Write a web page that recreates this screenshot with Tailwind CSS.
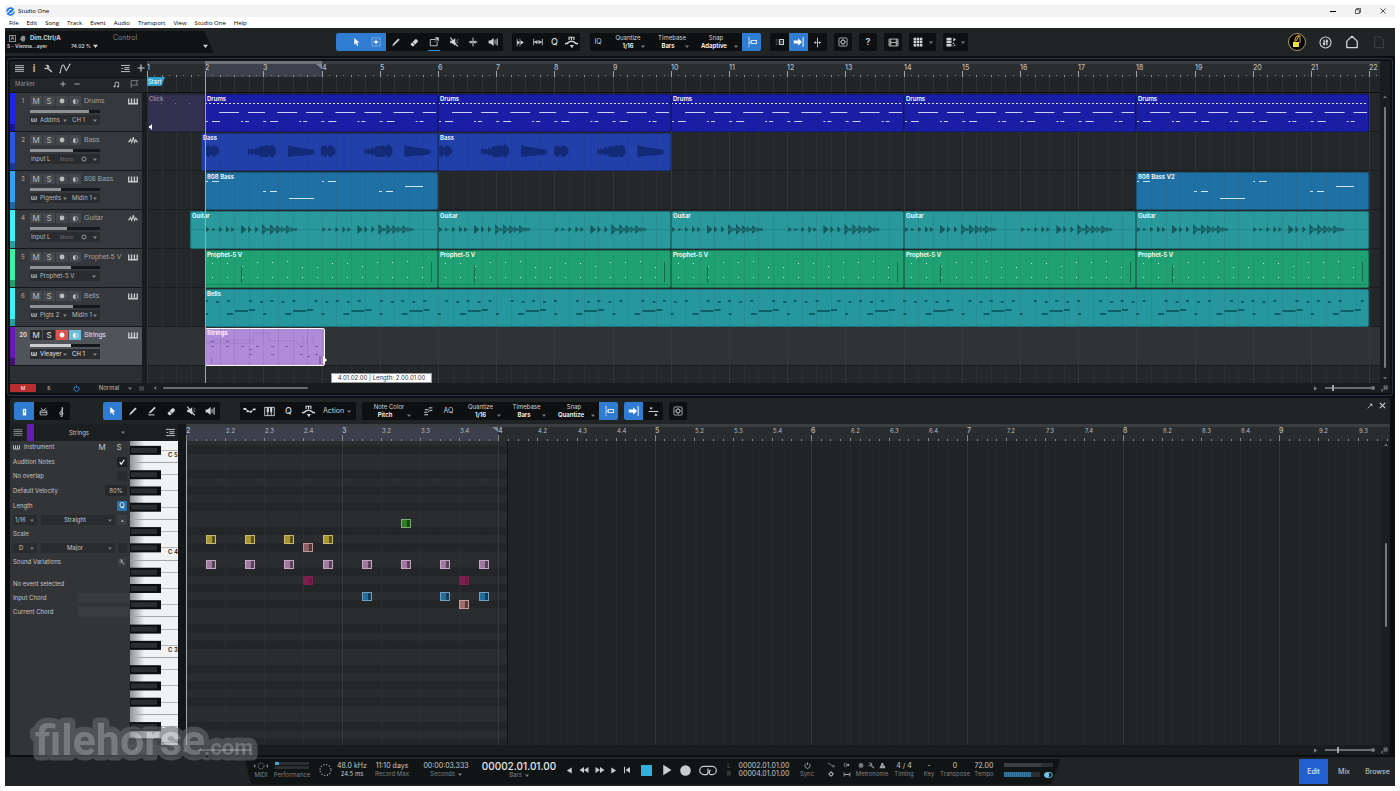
<!DOCTYPE html>
<html lang="en">
<head>
    <meta charset="UTF-8">
    <meta name="viewport" content="width=device-width, initial-scale=1.0">
    <title>Studio One</title>

    <!-- Tailwind CSS -->
    <script src="https://cdn.jsdelivr.net/npm/@tailwindcss/browser@4"></script>
</head>
<body class="bg-white p-[5px] h-screen flex flex-col overflow-hidden font-['Inter','Liberation_Sans',sans-serif] text-[6px] leading-[8px] text-[#b9bbbd]">

    <!-- Icon sprite -->
    <svg class="hidden">
        <symbol id="i-arrow" viewBox="0 0 16 16"><path d="M4 1l9 8-4 .4 2.4 4.8-2.2 1L7 10.4 4 13z" fill="currentColor"/></symbol>
        <symbol id="i-range" viewBox="0 0 16 16"><rect x="1.500" y="1.500" width="13" height="13" fill="none" stroke="currentColor" stroke-width="1.300" stroke-dasharray="2 1.700"/><path d="M8 4v8M4 8h8" stroke="currentColor" stroke-width="1.500"/><rect x="6" y="6" width="4" height="4" fill="currentColor"/></symbol>
        <symbol id="i-pen" viewBox="0 0 16 16"><path d="M2 15l2-5 9-9 2.4 2.2-9 9z" fill="currentColor"/></symbol>
        <symbol id="i-paint" viewBox="0 0 16 16"><path d="M3 12l1-3 8-8 2 2-8 8z" fill="currentColor"/><path d="M2 14.2h10" stroke="currentColor" stroke-width="1.6"/></symbol>
        <symbol id="i-eraser" viewBox="0 0 16 16"><path d="M1.500 10L9 2.500q1.500-1.500 3 0l1.500 1.500q1.500 1.500 0 3L6.500 14q-1.500 1-3 0L1.500 12.500q-1-1.200 0-2.500z" fill="currentColor"/><path d="M4.500 7.500l4.500 4.500" stroke="#0d0f10" stroke-width="1.300"/></symbol>
        <symbol id="i-split" viewBox="0 0 16 16"><path d="M11 4H2v10h11V7" fill="none" stroke="currentColor" stroke-width="1.400"/><path d="M10 1h5v5zM9 8l4-4" fill="currentColor" stroke="currentColor"/></symbol>
        <symbol id="i-mute" viewBox="0 0 16 16"><path d="M2 6h3l5-4v12l-5-4H2z" fill="currentColor"/><path d="M2 1l12 14" stroke="currentColor" stroke-width="1.800"/><path d="M12 6l3-2M12 8.500h3" stroke="currentColor"/></symbol>
        <symbol id="i-bend" viewBox="0 0 16 16"><path d="M8 1v14M1 8h14" fill="none" stroke="currentColor" stroke-width="1.500"/><path d="M4 5l3 3-3 3zM12 5L9 8l3 3z" fill="currentColor"/></symbol>
        <symbol id="i-speaker" viewBox="0 0 16 16"><path d="M1 5.500h3L9 1.500v13L4 10.500H1z" fill="currentColor"/><path d="M11 5v6M13 3.500v9M15 2v12" stroke="currentColor" stroke-width="1.200"/></symbol>
        <symbol id="i-ffw" viewBox="0 0 16 16"><path d="M2 1v14M7 1v14" stroke="currentColor"/><path d="M2 4l5 4-5 4zM8 4l6 4-6 4z" fill="currentColor"/></symbol>
        <symbol id="i-stretch" viewBox="0 0 16 16"><path d="M1 3v10M15 3v10M2 8h12M8 5v6" stroke="currentColor" stroke-width="1.300"/><path d="M2 8l4-3v6zM14 8l-4-3v6z" fill="currentColor"/></symbol>
        <symbol id="i-hump" viewBox="0 0 16 16"><path d="M5 5V1.500h6V5M8 1.500V5" fill="none" stroke="currentColor" stroke-width="1.400"/><path d="M0 9.500q3 0 4-1.500t4-1.500 4 1.500 4 1.500" fill="none" stroke="currentColor" stroke-width="1.800"/><path d="M6 11h5l-2.500 4z" fill="currentColor"/></symbol>
        <symbol id="i-snap" viewBox="0 0 16 16"><path d="M4 1v14" stroke="currentColor" stroke-width="1.300" stroke-dasharray="5 1"/><path d="M4 8h3M7 6h7v4H7z" fill="none" stroke="currentColor" stroke-width="1.500"/></symbol>
        <symbol id="i-follow" viewBox="0 0 16 16"><path d="M1 6h6V3l5 5-5 5v-3H1z" fill="currentColor"/><path d="M13.500 1.500v13" stroke="currentColor" stroke-width="1.300"/></symbol>
        <symbol id="i-ripple" viewBox="0 0 16 16"><path d="M2 4h3v8H2z" fill="none" stroke="currentColor" opacity=".4"/><path d="M7.500 4h6v8h-6z" fill="none" stroke="currentColor" stroke-width="1.800"/><path d="M9 8h3" stroke="currentColor"/></symbol>
        <symbol id="i-cursor" viewBox="0 0 16 16"><path d="M8 1v14M3 8h3M10 8h3" stroke="currentColor" stroke-width="1.300"/><path d="M4.500 6l2.500 2-2.500 2zM11.500 6L9 8l2.500 2z" fill="currentColor"/></symbol>
        <symbol id="i-target" viewBox="0 0 16 16"><rect x="1.500" y="1.500" width="13" height="13" rx="1.500" fill="none" stroke="currentColor" stroke-width="1.200"/><circle cx="8" cy="8" r="3.200" fill="none" stroke="currentColor" stroke-width="1.500"/><path d="M8 3v2M8 11v2M3 8h2M11 8h2" stroke="currentColor"/></symbol>
        <symbol id="i-film" viewBox="0 0 16 16"><path d="M4 3h8v10H4zM4 8h8M1.500 3H4M12 3h2.500v10H12M4 13H1.500V3M1.500 6.300H4M1.500 9.700H4M12 6.300h2.500M12 9.700h2.500" fill="none" stroke="currentColor" stroke-width="1.200"/></symbol>
        <symbol id="i-grid" viewBox="0 0 16 16"><path d="M1 1h4v4H1zM6 1h4v4H6zM11 1h4v4h-4zM1 6h4v4H1zM6 6h4v4H6zM11 6h4v4h-4zM1 11h4v4H1zM6 11h4v4H6zM11 11h4v4h-4z" fill="currentColor"/></symbol>
        <symbol id="i-rows" viewBox="0 0 16 16"><path d="M0 1h8v4H0zM0 6h8v4H0zM0 11h8v4H0zM11 1l4 3-4 3zM10 9h2v2h-2zM12 12h2v2h-2zM10 13h1v2h-1z" fill="currentColor"/></symbol>
        <symbol id="i-menu" viewBox="0 0 16 16"><path d="M0 3h16M0 6.300h16M0 9.700h16M0 13h16" stroke="currentColor" stroke-width="1.600"/></symbol>
        <symbol id="i-list" viewBox="0 0 16 16"><path d="M0 2.500h16M0 13.500h16M1 8h3M6 6.500h9M6 9.500h9" stroke="currentColor" stroke-width="1.700"/></symbol>
        <symbol id="i-wrench" viewBox="0 0 16 16"><path d="M6 7l8 7" stroke="currentColor" stroke-width="2.400"/><path d="M3 1.500l3.500 2v3.500l-3.500 1.500L1 7M6 2q3 1 3 5" fill="none" stroke="currentColor" stroke-width="1.900"/></symbol>
        <symbol id="i-curve" viewBox="0 0 16 16"><path d="M1 14Q4-2 7 5t3 6l5-9" fill="none" stroke="currentColor" stroke-width="1.500"/><path d="M0 13h2v2H0zM14 1h2v2h-2z" fill="currentColor"/></symbol>
        <symbol id="i-plus" viewBox="0 0 16 16"><path d="M8 1v14M1 8h14" stroke="currentColor" stroke-width="2.400"/></symbol>
        <symbol id="i-minus" viewBox="0 0 16 16"><path d="M1 8h14" stroke="currentColor" stroke-width="2.400"/></symbol>
        <symbol id="i-notes" viewBox="0 0 16 16"><path d="M5 12V3h8v9" fill="none" stroke="currentColor" stroke-width="1.800"/><circle cx="3.500" cy="12.500" r="2.200" fill="currentColor"/><circle cx="11.500" cy="12.500" r="2.200" fill="currentColor"/></symbol>
        <symbol id="i-flag" viewBox="0 0 16 16"><path d="M2 15V2h12l-3 4 3 4H2" fill="none" stroke="currentColor" stroke-width="1.400"/></symbol>
        <symbol id="i-keys" viewBox="0 0 16 10"><path d="M1.200 0v8.500h13.600V0M5.700 0v8M10.300 0v8" fill="none" stroke="currentColor" stroke-width="2.200"/></symbol>
        <symbol id="i-wave" viewBox="0 0 16 10"><path d="M0 7h2l2-4 2 5 2.500-8 2 8 2-4 1.500 3H16" fill="none" stroke="currentColor" stroke-width="1.700"/></symbol>
        <symbol id="i-halfmoon" viewBox="0 0 16 16"><path d="M8 2a6 6 0 000 12z" fill="currentColor"/><path d="M10 3a5.500 5.500 0 010 10" fill="none" stroke="currentColor" stroke-width="1.500"/></symbol>
        <symbol id="i-rec" viewBox="0 0 16 16"><circle cx="8" cy="8" r="6.500" fill="currentColor"/></symbol>
        <symbol id="i-ring" viewBox="0 0 16 16"><circle cx="8" cy="8" r="5.500" fill="none" stroke="currentColor" stroke-width="2"/></symbol>
        <symbol id="i-down" viewBox="0 0 8 6"><path d="M0 1h8L4 6z" fill="currentColor"/></symbol>
        <symbol id="i-tri" viewBox="0 0 16 16"><path d="M3 1l11 7-11 7z" fill="currentColor"/></symbol>
        <symbol id="i-back" viewBox="0 0 16 16"><path d="M13 1L2 8l11 7z" fill="currentColor"/></symbol>
        <symbol id="i-rew" viewBox="0 0 20 16"><path d="M10 2L1 8l9 6zM19 2l-9 6 9 6z" fill="currentColor"/></symbol>
        <symbol id="i-fwd" viewBox="0 0 20 16"><path d="M10 2l9 6-9 6zM1 2l9 6-9 6z" fill="currentColor"/></symbol>
        <symbol id="i-start" viewBox="0 0 16 16"><path d="M14 2L5 8l9 6z" fill="currentColor"/><path d="M3 1.500v13" stroke="currentColor" stroke-width="2"/></symbol>
        <symbol id="i-loop" viewBox="0 0 26 16"><path d="M10 14H7A6 6 0 017 2h12a6 6 0 010 12h-3M13 5v5q0 4-3 4M16 14q-2-2-1-5l2-2" fill="none" stroke="currentColor" stroke-width="1.700"/></symbol>
        <symbol id="i-power" viewBox="0 0 16 16"><path d="M4.500 3.500a6 6 0 107 0M8 1v6" fill="none" stroke="currentColor" stroke-width="2"/></symbol>
        <symbol id="i-note" viewBox="0 0 16 16"><path d="M5 3h6v12H5z" fill="currentColor"/><path d="M4 2h8M8 5v5" stroke="#2f7cd2" stroke-width="1.200"/></symbol>
        <symbol id="i-drum" viewBox="0 0 16 16"><path d="M2 7h12v7H2zM2 10h12M3 2l5 4 5-4" fill="none" stroke="currentColor" stroke-width="1.400"/></symbol>
        <symbol id="i-clef" viewBox="0 0 16 16"><path d="M9 15V2q2 2-1 5-4 3-2 5 3 2 4-1 0-3-3-2M9 15q-2 1-3-1" fill="none" stroke="currentColor" stroke-width="1.400"/></symbol>
        <symbol id="i-vel" viewBox="0 0 16 16"><path d="M0 5h3l4 4h3l3-3h3" fill="none" stroke="currentColor" stroke-width="1.200"/><path d="M0 4h3.500v2.500H0zM4 7h3v2.500H4zM8.500 7.500h3V10h-3zM12.500 4.500H16V7h-3.500z" fill="currentColor"/></symbol>
        <symbol id="i-pianoroll" viewBox="0 0 16 16"><path d="M1 2h14v12H1zM5.500 2v12M10.500 2v12" fill="none" stroke="currentColor" stroke-width="1.300"/><path d="M4 2h3v7H4zM9 2h3v7H9z" fill="currentColor"/></symbol>
        <symbol id="i-lanes" viewBox="0 0 16 16"><path d="M9 3h6M3 6h6M2 10h5M8 10l3-3h4M2 14h6" fill="none" stroke="currentColor" stroke-width="1.600"/></symbol>
        <symbol id="i-center" viewBox="0 0 16 16"><path d="M1 8h14" stroke="currentColor" stroke-width="1.600"/><path d="M2 2h5L4.500 5.500zM9 14h5l-2.500-3.500z" fill="currentColor"/></symbol>
        <symbol id="i-hand" viewBox="0 0 16 16"><path d="M3 7V4h2V2h2V1h2v1h2v1h2v8l-2 4H6L1 9l1-1z" fill="currentColor"/></symbol>
        <symbol id="i-home" viewBox="0 0 16 16"><path d="M2 7l6-5.500L14 7v7.500H2z" fill="none" stroke="currentColor" stroke-width="1.500" stroke-linejoin="round"/></symbol>
        <symbol id="i-page" viewBox="0 0 16 16"><path d="M3 2h6l4 4v8.500H3z" fill="none" stroke="currentColor" stroke-width="1.300"/></symbol>
        <symbol id="i-pause" viewBox="0 0 16 16"><circle cx="8" cy="8" r="6.800" fill="none" stroke="currentColor" stroke-width="1.400"/><path d="M6.300 4.500v7M9.700 4.500v7" stroke="currentColor" stroke-width="1.600"/><path d="M4.300 8.500h4L6.300 12zM7.700 7.500h4L9.700 4z" fill="currentColor"/></symbol>
        <symbol id="i-out" viewBox="0 0 16 16"><path d="M2 14l8-8" stroke="currentColor" stroke-width="2"/><path d="M7 2h7v7z" fill="currentColor"/></symbol>
        <symbol id="i-x" viewBox="0 0 16 16"><path d="M2 2l12 12M14 2L2 14" stroke="currentColor" stroke-width="2.400"/></symbol>
        <symbol id="i-metro" viewBox="0 0 16 16"><path d="M6 2h4l5 12H1z" fill="currentColor"/><path d="M8 10l4-8" stroke="#141718" stroke-width="1.300"/></symbol>
        <symbol id="i-corner" viewBox="0 0 16 16"><path d="M6 1h9v9H6zM1 9h3v6H1z" fill="currentColor"/><path d="M8 4h5M8 7h5" stroke="#141718"/></symbol>
        <symbol id="i-gear" viewBox="0 0 16 16"><circle cx="8" cy="8" r="4.500" fill="none" stroke="currentColor" stroke-width="3"/><path d="M8 0v3M8 13v3M0 8h3M13 8h3" stroke="currentColor" stroke-width="2"/></symbol>
        <symbol id="i-preroll" viewBox="0 0 16 16"><path d="M1 2v12M6 2v12M8 8h7" stroke="currentColor" stroke-width="1.500"/><path d="M7 8l6-4v8z" fill="currentColor"/></symbol>
        <symbol id="i-precount" viewBox="0 0 16 16"><path d="M0 4h6l3 4h7M10 11h6" fill="none" stroke="currentColor" stroke-width="1.400"/></symbol>
        <symbol id="i-punch" viewBox="0 0 16 16"><path d="M1 3v10M15 3v10" stroke="currentColor" stroke-width="1.500"/><path d="M2 5l5 3-5 3zM14 5L9 8l5 3zM6 7h4v2H6z" fill="currentColor"/></symbol>
    </svg>

    <!-- Title bar -->
    <header class="h-[12px] shrink-0 bg-[#f3f3f3] flex items-center pl-[1px] text-black font-['Open_Sans',sans-serif]">
        <svg class="w-[9px] h-[9px]" viewBox="0 0 16 16"><circle cx="8" cy="8" r="7.500" fill="#2178ee"/><path d="M0 10q4 0 5-3t5-3M6 12q5 0 6-3t4-3" fill="none" stroke="#fff" stroke-width="2"/></svg>
        <h1 class="ml-[3px]">Studio One</h1>
        <div class="ml-auto flex">
            <button aria-label="Minimize" class="w-[25px] flex justify-center items-center"><span class="w-[6px] h-px bg-black"></span></button>
            <button aria-label="Restore" class="w-[25px] flex justify-center"><svg class="w-[6px] h-[6px]" viewBox="0 0 14 14"><path d="M1 4h9v9H1zM4 4V1h9v9h-3" fill="none" stroke="#000" stroke-width="1.500"/></svg></button>
            <button aria-label="Close" class="w-[25px] flex justify-center"><svg class="w-[6px] h-[6px]" viewBox="0 0 14 14"><path d="M1 1l12 12M13 1L1 13" stroke="#000" stroke-width="1.500"/></svg></button>
        </div>
    </header>
    <nav class="h-[11px] shrink-0 bg-white flex items-center gap-[8px] pl-[4px] text-black font-['Open_Sans',sans-serif]">
        <a href="#">File</a><a href="#">Edit</a><a href="#">Song</a><a href="#">Track</a><a href="#">Event</a><a href="#">Audio</a><a href="#">Transport</a><a href="#">View</a><a href="#">Studio One</a><a href="#">Help</a>
    </nav>

    <div class="flex-1 min-h-0 flex flex-col bg-[#0b0d10]">

        <!-- Main toolbar -->
        <div class="h-[28px] shrink-0 bg-[#202425] flex items-center text-[#d2d4d5]">
            <div class="w-[331px] shrink-0">
                <div class="w-[209px] h-[22px] pr-[6px] bg-[#101213] [clip-path:polygon(0_0,199px_0,209px_100%,0_100%)] flex">
                    <div class="w-[103px] pl-[2px] pt-[3px] font-semibold">
                        <div class="flex items-center gap-[3px] pl-[2px]">
                            <span class="border border-[#8a8c8e] w-[7px] h-[7px] text-[5px] leading-[5px] text-center font-normal">A</span>
                            <svg class="w-[8px] h-[7px] text-[#8a8c8e]"><use href="#i-hand"/></svg>
                            <span class="font-bold">Dim.Ctrl/A</span>
                        </div>
                        <div class="flex items-center text-[5px]">
                            <span class="w-[64px]">5 - Vienna...ayer</span>
                            <span>74.02 %</span>
                            <svg class="w-[5px] h-[4px] ml-[2px]"><use href="#i-down"/></svg>
                        </div>
                    </div>
                    <div class="flex-1 pl-[5px] pt-[3px] text-[7px] text-[#7d8082]">Control</div>
                    <svg class="w-[5px] h-[4px] mt-[13px]"><use href="#i-down"/></svg>
                </div>
            </div>

            <div class="flex h-[18px] bg-[#0d0f10] rounded-[2px] overflow-hidden">
                <button aria-label="Arrow tool" class="w-[30px] bg-[#2f7cd2] text-white flex items-center justify-center pl-[10px]"><svg class="w-[9px] h-[10px]"><use href="#i-arrow"/></svg></button>
                <button aria-label="Range tool" class="w-[20px] bg-[#2f7cd2] text-white/80 flex items-center justify-center"><svg class="w-[10px] h-[10px]"><use href="#i-range"/></svg></button>
                <button aria-label="Paint tool" class="w-[19px] flex items-center justify-center"><svg class="w-[9px] h-[9px]"><use href="#i-pen"/></svg></button>
                <button aria-label="Eraser" class="w-[19px] flex items-center justify-center"><svg class="w-[9px] h-[9px]"><use href="#i-eraser"/></svg></button>
                <button aria-label="Split tool" class="relative w-[20px] flex items-center justify-center"><svg class="w-[10px] h-[10px]"><use href="#i-split"/></svg><span class="absolute bottom-0 left-[4px] w-[12px] h-px bg-[#3b8fd0]"></span></button>
                <button aria-label="Mute tool" class="w-[19px] flex items-center justify-center"><svg class="w-[10px] h-[10px]"><use href="#i-mute"/></svg></button>
                <button aria-label="Bend tool" class="w-[20px] flex items-center justify-center"><svg class="w-[10px] h-[10px]"><use href="#i-bend"/></svg></button>
                <button aria-label="Listen tool" class="w-[20px] flex items-center justify-center"><svg class="w-[10px] h-[10px]"><use href="#i-speaker"/></svg></button>
            </div>

            <div class="flex h-[18px] bg-[#0d0f10] rounded-[2px] ml-[9px]">
                <button aria-label="Strip silence" class="w-[17px] flex items-center justify-center"><svg class="w-[9px] h-[9px]"><use href="#i-ffw"/></svg></button>
                <button aria-label="Audio bend" class="w-[17px] flex items-center justify-center"><svg class="w-[10px] h-[10px]"><use href="#i-stretch"/></svg></button>
                <button class="w-[17px] text-[9px] font-medium">Q</button>
                <button aria-label="Macros" class="w-[17px] flex items-center justify-center"><svg class="w-[13px] h-[13px]"><use href="#i-hump"/></svg></button>
            </div>

            <div class="flex h-[18px] bg-[#0d0f10] rounded-[2px] ml-[10px] overflow-hidden">
                <button class="w-[16px] text-[7px]">IQ</button>
                <div class="relative w-[44px] pt-[1px] text-center">
                    <label for="quantize" class="block">Quantize</label>
                    <select id="quantize" class="appearance-none block w-full text-center font-semibold text-white"><option>1/16</option><option>1/8</option></select>
                    <svg class="absolute right-[5px] bottom-[3px] w-[4px] h-[3px] text-[#77797b]"><use href="#i-down"/></svg>
                </div>
                <div class="relative w-[44px] pt-[1px] text-center">
                    <label for="timebase" class="block">Timebase</label>
                    <select id="timebase" class="appearance-none block w-[36px] text-center font-semibold text-white"><option>Bars</option><option>Seconds</option></select>
                    <svg class="absolute right-[5px] bottom-[3px] w-[4px] h-[3px] text-[#77797b]"><use href="#i-down"/></svg>
                </div>
                <div class="relative w-[48px] pt-[1px] text-center">
                    <label for="snap" class="block pr-[4px]">Snap</label>
                    <select id="snap" class="appearance-none block w-[40px] text-center font-semibold text-white"><option>Adaptive</option><option>Bar</option></select>
                    <svg class="absolute right-[4px] bottom-[3px] w-[4px] h-[3px] text-[#77797b]"><use href="#i-down"/></svg>
                </div>
                <button aria-label="Snap to grid" class="w-[19px] bg-[#2f7cd2] text-white/80 flex items-center justify-center"><svg class="w-[12px] h-[12px]"><use href="#i-snap"/></svg></button>
            </div>

            <div class="flex h-[18px] bg-[#0d0f10] rounded-[2px] ml-[9px]">
                <button aria-label="Ripple edit" class="w-[19px] flex items-center justify-center"><svg class="w-[10px] h-[10px]"><use href="#i-ripple"/></svg></button>
                <button aria-label="Autoscroll" class="w-[19px] bg-[#2f7cd2] text-white flex items-center justify-center"><svg class="w-[12px] h-[12px]"><use href="#i-follow"/></svg></button>
                <button aria-label="Cursor follows edit" class="w-[19px] flex items-center justify-center"><svg class="w-[11px] h-[11px]"><use href="#i-cursor"/></svg></button>
            </div>
            <button aria-label="Focus" class="w-[18px] h-[18px] ml-[7px] bg-[#0d0f10] rounded-[2px] flex items-center justify-center"><svg class="w-[10px] h-[10px]"><use href="#i-target"/></svg></button>
            <button class="w-[18px] h-[18px] ml-[7px] bg-[#0d0f10] rounded-[2px] text-[9px] font-semibold">?</button>
            <button aria-label="Video player" class="w-[18px] h-[18px] ml-[7px] bg-[#0d0f10] rounded-[2px] flex items-center justify-center"><svg class="w-[11px] h-[11px]"><use href="#i-film"/></svg></button>
            <button aria-label="Show pages" class="w-[27px] h-[18px] ml-[7px] bg-[#0d0f10] rounded-[2px] flex items-center justify-center gap-[6px]"><svg class="w-[10px] h-[10px]"><use href="#i-grid"/></svg><svg class="w-[4px] h-[3px] text-[#77797b]"><use href="#i-down"/></svg></button>
            <button aria-label="Layers" class="w-[25px] h-[18px] ml-[7px] bg-[#0d0f10] rounded-[2px] flex items-center justify-center gap-[4px]"><svg class="w-[11px] h-[10px]"><use href="#i-rows"/></svg><svg class="w-[4px] h-[3px] text-[#77797b]"><use href="#i-down"/></svg></button>

            <div class="ml-auto flex items-center gap-[13px] pr-[9px]">
                <button aria-label="Account"><svg class="w-[18px] h-[18px]" viewBox="0 0 18 18"><circle cx="9" cy="9" r="8.500" fill="#000" stroke="#a8996a"/><path d="M7 10V7q0-3 3-4.500l2 .5v7" fill="none" stroke="#b88a2a" stroke-width="1.200"/><path d="M8 8l3-5" stroke="#e8c84a"/><rect x="5" y="9" width="6" height="5" fill="#f0df3c"/></svg></button>
                <button aria-label="Transport sync"><svg class="w-[13px] h-[13px]"><use href="#i-pause"/></svg></button>
                <button aria-label="Home"><svg class="w-[14px] h-[14px]"><use href="#i-home"/></svg></button>
                <button aria-label="New page" class="text-[#3b3e40]"><svg class="w-[14px] h-[14px]"><use href="#i-page"/></svg></button>
            </div>
        </div>

        <!-- Arrangement -->
        <section class="mx-[2px] mt-[2px] shrink-0 border border-[#263240] rounded-[3px] p-[2px] bg-[#0f1214]">
            <div class="flex">
                <!-- Track list -->
                <div class="w-[137px] shrink-0 bg-[#1a1d1f]">
                    <div class="h-[16px] pb-[2px] bg-[#1c1f21] flex items-center pl-[5px] pr-[2px] text-[#c4c6c8]">
                        <button aria-label="Menu"><svg class="w-[9px] h-[9px]"><use href="#i-menu"/></svg></button>
                        <button class="w-[20px] text-[10px] font-semibold">i</button>
                        <button aria-label="Tools"><svg class="w-[9px] h-[9px]"><use href="#i-wrench"/></svg></button>
                        <button aria-label="Automation" class="ml-[6px]"><svg class="w-[12px] h-[11px]"><use href="#i-curve"/></svg></button>
                        <button aria-label="Track list" class="ml-auto"><svg class="w-[9px] h-[9px]"><use href="#i-list"/></svg></button>
                        <button aria-label="Add track" class="ml-[7px]"><svg class="w-[8px] h-[8px]"><use href="#i-plus"/></svg></button>
                    </div>
                    <div class="h-[16px] pb-[2px] bg-[#242729] border-y border-[#121416] flex items-center pl-[5px] pr-[8px] text-[#8d9092]">
                        <span class="w-[45px]">Marker</span>
                        <button aria-label="Add marker" class="text-[#b9bbbd]"><svg class="w-[6px] h-[6px]"><use href="#i-plus"/></svg></button>
                        <button aria-label="Remove marker" class="ml-[8px] text-[#b9bbbd]"><svg class="w-[6px] h-[6px]"><use href="#i-minus"/></svg></button>
                        <svg class="ml-auto w-[7px] h-[7px] text-[#c4c6c8]"><use href="#i-notes"/></svg>
                        <svg class="ml-[10px] w-[9px] h-[10px]"><use href="#i-flag"/></svg>
                    </div>
                    <div id="tracks"></div>
                    <div class="h-[17px] w-[132px] bg-[#2c2e31]"></div>
                </div>

                <!-- Timeline -->
                <div class="relative flex-1 min-w-0 overflow-hidden">
                    <div id="ruler" class="relative h-[16px] bg-[#2a2d30] border-t-[3px] border-[#3b3e41]"></div>
                    <div id="markers" class="relative h-[16px] bg-[#222527] border-b border-[#0e1011]">
                        <span class="relative z-10 block w-[18px] h-[9px] pl-px bg-[#2fa0cc] text-white text-[6px] leading-[9px] [clip-path:polygon(0_0,100%_0,80%_100%,0_100%)]">Start</span>
                    </div>
                    <div id="lanes" class="relative h-[290px] bg-[#25282a]"></div>
                    <div class="absolute left-[58px] top-[16px] bottom-0 w-px bg-[#a4a6a8]"></div>
                    <!-- Drag read-out -->
                    <output class="absolute left-[184px] top-[312px] w-[101px] h-[10px] bg-white border border-[#9a9a9a] text-[#333] text-center leading-[8px]">4.01.02.00 | Length: 2.00.01.00</output>
                    <svg class="absolute left-[176px] top-[295px] w-[4px] h-[8px]" viewBox="0 0 4 8"><path d="M0 0v8l4-4z" fill="#fff"/></svg>
                </div>

                <!-- Vertical scroll -->
                <div class="w-[10px] shrink-0 pt-[34px] bg-[#1a1d1f] flex flex-col items-center text-[#6f7274]">
                    <svg class="w-[4px] h-[4px] rotate-180"><use href="#i-down"/></svg>
                    <div class="w-[2px] my-[8px] flex-1 bg-[#77797b] rounded"></div>
                    <svg class="w-[4px] h-[4px] mb-[3px]"><use href="#i-down"/></svg>
                </div>
            </div>

            <div class="h-[10px] bg-[#1a1d1f] flex items-center text-[#b9bbbd]">
                <button class="w-[26px] h-[8px] bg-[#b92d2f] text-white text-[5px] rounded-[1px]">M</button>
                <button class="w-[26px] text-[5px] font-semibold">S</button>
                <button aria-label="Power" class="w-[28px] flex justify-center text-[#2f8fe0]"><svg class="w-[7px] h-[7px]"><use href="#i-power"/></svg></button>
                <select aria-label="Track height" class="appearance-none w-[38px] text-center leading-[8px]"><option>Normal</option><option>Small</option></select>
                <svg class="w-[4px] h-[3px] text-[#77797b]"><use href="#i-down"/></svg>
                <svg class="ml-[7px] w-[5px] h-[5px] text-[#77797b]"><use href="#i-menu"/></svg>
                <svg class="ml-[9px] w-[4px] h-[4px] text-[#77797b]"><use href="#i-back"/></svg>
                <div class="ml-[6px] w-[145px] h-[2px] bg-[#6a6c6e] rounded"></div>
                <svg class="ml-auto w-[5px] h-[5px] text-[#77797b]"><use href="#i-tri"/></svg>
                <input type="range" aria-label="Zoom" value="17" class="appearance-none ml-[7px] w-[46px] h-[6px] bg-transparent [&::-webkit-slider-runnable-track]:h-[2px] [&::-webkit-slider-runnable-track]:bg-[#6a6c6e] [&::-webkit-slider-thumb]:appearance-none [&::-webkit-slider-thumb]:w-[2px] [&::-webkit-slider-thumb]:h-[6px] [&::-webkit-slider-thumb]:-mt-[2px] [&::-webkit-slider-thumb]:bg-[#a4a6a8]">
                <span class="w-[4px] h-[4px] rounded-full bg-[#77797b]"></span>
                <svg class="ml-[6px] mr-[2px] w-[7px] h-[7px] text-[#77797b]"><use href="#i-corner"/></svg>
            </div>
        </section>

        <!-- Note editor -->
        <section class="mt-[2px] mx-[5px] flex-1 min-h-0 flex flex-col bg-[#1a1d1f]">
            <div class="h-[26px] shrink-0 bg-[#202425] flex items-center pl-[4px] text-[#d2d4d5]">
                <div class="flex h-[18px] bg-[#0d0f10] rounded-[2px] overflow-hidden">
                    <button aria-label="Piano view" class="w-[20px] bg-[#2f7cd2] text-white flex items-center justify-center"><svg class="w-[9px] h-[9px]"><use href="#i-note"/></svg></button>
                    <button aria-label="Drum view" class="w-[18px] flex items-center justify-center"><svg class="w-[9px] h-[9px]"><use href="#i-drum"/></svg></button>
                    <button aria-label="Score view" class="w-[18px] flex items-center justify-center"><svg class="w-[11px] h-[11px]"><use href="#i-clef"/></svg></button>
                </div>
                <div class="flex h-[18px] bg-[#0d0f10] rounded-[2px] ml-[33px] overflow-hidden">
                    <button aria-label="Arrow tool" class="w-[19px] bg-[#2f7cd2] text-white flex items-center justify-center"><svg class="w-[9px] h-[10px]"><use href="#i-arrow"/></svg></button>
                    <button aria-label="Draw tool" class="w-[20px] flex items-center justify-center"><svg class="w-[9px] h-[9px]"><use href="#i-pen"/></svg></button>
                    <button aria-label="Paint tool" class="w-[19px] flex items-center justify-center"><svg class="w-[10px] h-[10px]"><use href="#i-paint"/></svg></button>
                    <button aria-label="Eraser" class="w-[20px] flex items-center justify-center"><svg class="w-[9px] h-[9px]"><use href="#i-eraser"/></svg></button>
                    <button aria-label="Mute tool" class="w-[19px] flex items-center justify-center"><svg class="w-[10px] h-[10px]"><use href="#i-mute"/></svg></button>
                    <button aria-label="Listen tool" class="w-[20px] flex items-center justify-center"><svg class="w-[10px] h-[10px]"><use href="#i-speaker"/></svg></button>
                </div>
                <div class="flex h-[18px] bg-[#0d0f10] rounded-[2px] ml-[20px]">
                    <button aria-label="Velocity" class="w-[19px] flex items-center justify-center"><svg class="w-[13px] h-[12px]"><use href="#i-vel"/></svg></button>
                    <button aria-label="Keys" class="w-[20px] flex items-center justify-center"><svg class="w-[11px] h-[11px]"><use href="#i-pianoroll"/></svg></button>
                    <button class="w-[19px] text-[9px] font-medium">Q</button>
                    <button aria-label="Humanize" class="w-[20px] flex items-center justify-center"><svg class="w-[13px] h-[13px]"><use href="#i-hump"/></svg></button>
                    <button class="w-[38px] flex items-center justify-center gap-[3px] text-[7px]">Action <svg class="w-[4px] h-[3px] text-[#77797b]"><use href="#i-down"/></svg></button>
                </div>
                <div class="flex h-[18px] bg-[#0d0f10] rounded-[2px] ml-[6px] overflow-hidden">
                    <div class="relative w-[54px] pt-[1px] text-center">
                        <label for="noteColor" class="block">Note Color</label>
                        <select id="noteColor" class="appearance-none block w-[46px] text-center font-semibold text-white"><option>Pitch</option><option>Velocity</option></select>
                        <svg class="absolute right-[5px] bottom-[3px] w-[4px] h-[3px] text-[#77797b]"><use href="#i-down"/></svg>
                    </div>
                    <button aria-label="Step input" class="w-[24px] flex items-center justify-center"><svg class="w-[10px] h-[10px]"><use href="#i-lanes"/></svg></button>
                    <button class="w-[17px] text-[7px]">AQ</button>
                    <div class="relative w-[47px] pt-[1px] text-center">
                        <label for="edQuantize" class="block">Quantize</label>
                        <select id="edQuantize" class="appearance-none block w-full text-center font-semibold text-white"><option>1/16</option><option>1/8</option></select>
                        <svg class="absolute right-[3px] bottom-[3px] w-[4px] h-[3px] text-[#77797b]"><use href="#i-down"/></svg>
                    </div>
                    <div class="relative w-[45px] pt-[1px] text-center">
                        <label for="edTimebase" class="block">Timebase</label>
                        <select id="edTimebase" class="appearance-none block w-[40px] text-center font-semibold text-white"><option>Bars</option><option>Seconds</option></select>
                        <svg class="absolute right-[3px] bottom-[3px] w-[4px] h-[3px] text-[#77797b]"><use href="#i-down"/></svg>
                    </div>
                    <div class="relative w-[50px] pt-[1px] text-center">
                        <label for="edSnap" class="block">Snap</label>
                        <select id="edSnap" class="appearance-none block w-[44px] text-center font-semibold text-white"><option>Quantize</option><option>Bar</option></select>
                        <svg class="absolute right-[4px] bottom-[3px] w-[4px] h-[3px] text-[#77797b]"><use href="#i-down"/></svg>
                    </div>
                    <button aria-label="Snap to grid" class="w-[19px] bg-[#2f7cd2] text-white/80 flex items-center justify-center"><svg class="w-[12px] h-[12px]"><use href="#i-snap"/></svg></button>
                </div>
                <div class="flex h-[18px] bg-[#0d0f10] rounded-[2px] ml-[6px] overflow-hidden">
                    <button aria-label="Autoscroll" class="w-[19px] bg-[#2f7cd2] text-white flex items-center justify-center"><svg class="w-[12px] h-[12px]"><use href="#i-follow"/></svg></button>
                    <button aria-label="Link" class="w-[20px] flex items-center justify-center"><svg class="w-[11px] h-[11px]"><use href="#i-center"/></svg></button>
                </div>
                <button aria-label="Focus" class="w-[18px] h-[18px] ml-[6px] bg-[#0d0f10] rounded-[2px] flex items-center justify-center"><svg class="w-[10px] h-[10px]"><use href="#i-target"/></svg></button>
                <div class="ml-auto flex gap-[6px] pr-[4px] self-start pt-[4px]">
                    <button aria-label="Detach"><svg class="w-[6px] h-[6px]"><use href="#i-out"/></svg></button>
                    <button aria-label="Close editor"><svg class="w-[7px] h-[7px]"><use href="#i-x"/></svg></button>
                </div>
            </div>

            <div class="h-[17px] shrink-0 flex">
                <div class="w-[168px] shrink-0 flex items-center pl-[3px] pr-[3px] bg-[#1c1f21] text-[#c4c6c8]">
                    <button aria-label="Menu"><svg class="w-[10px] h-[9px] text-[#8d9092]"><use href="#i-menu"/></svg></button>
                    <span class="ml-[4px] w-[7px] h-full bg-[#651ab3]"></span>
                    <select aria-label="Part" class="appearance-none w-[90px] text-center leading-[8px]"><option>Strings</option></select>
                    <svg class="-ml-[3px] w-[4px] h-[3px] text-[#77797b]"><use href="#i-down"/></svg>
                    <button aria-label="Track list" class="ml-auto"><svg class="w-[9px] h-[9px]"><use href="#i-list"/></svg></button>
                </div>
                <div class="w-[8px] shrink-0 bg-[#141718]"></div>
                <div id="editorRuler" class="relative flex-1 overflow-hidden bg-[#2a2d30] border-t-[3px] border-[#3b3e41]"></div>
            </div>

            <div class="flex-1 min-h-0 flex">
                <form class="w-[120px] shrink-0 bg-[#323438] px-[3px] text-[#c2c4c6]">
                    <div class="h-[14px] pb-[2px] flex items-center">
                        <svg class="w-[7px] h-[5px] mr-[4px]"><use href="#i-keys"/></svg>
                        <span>Instrument</span>
                        <button type="button" class="ml-auto w-[18px] text-[8px]">M</button>
                        <button type="button" class="w-[16px] text-[8px]">S</button>
                    </div>
                    <div class="h-[14px] flex items-center justify-between">
                        <label for="audition">Audition Notes</label>
                        <span class="relative flex">
                            <input id="audition" type="checkbox" checked class="appearance-none w-[10px] h-[10px] bg-[#1e2022] rounded-[1px]">
                            <svg class="absolute left-[2px] top-[2px] w-[6px] h-[6px] pointer-events-none" viewBox="0 0 8 8"><path d="M1 4l2 3 4-6" fill="none" stroke="#fff" stroke-width="1.600"/></svg>
                        </span>
                    </div>
                    <div class="h-[14px] flex items-center justify-between">
                        <label for="overlap">No overlap</label>
                        <input id="overlap" type="checkbox" class="appearance-none w-[10px] h-[10px] bg-[#292b2e] rounded-[1px]">
                    </div>
                    <div class="h-[15px] flex items-center justify-between">
                        <label for="velocity">Default Velocity</label>
                        <input id="velocity" type="text" value="80%" class="w-[22px] h-[11px] bg-[#26282b] text-center rounded-[1px]">
                    </div>
                    <div class="h-[15px] flex items-center justify-between">
                        <label for="length">Length</label>
                        <button type="button" class="w-[10px] h-[10px] bg-[#2671a8] text-white rounded-[1px] text-[7px] leading-[10px]">Q</button>
                    </div>
                    <div class="h-[14px] flex items-center gap-[4px]">
                        <div class="relative"><select id="length" class="appearance-none w-[24px] h-[10px] pl-[2px] bg-[#292b2e] rounded-[1px]"><option>1/16</option></select><svg class="absolute right-[3px] top-[4px] w-[4px] h-[3px] text-[#77797b]"><use href="#i-down"/></svg></div>
                        <div class="relative"><select aria-label="Feel" class="appearance-none w-[74px] h-[10px] pr-[6px] text-center bg-[#292b2e] rounded-[1px]"><option>Straight</option></select><svg class="absolute right-[3px] top-[4px] w-[4px] h-[3px] text-[#77797b]"><use href="#i-down"/></svg></div>
                        <button type="button" class="w-[9px] h-[10px] -ml-px bg-[#3a3d42] rounded-[1px] text-center leading-[9px]">•</button>
                    </div>
                    <div class="h-[14px] flex items-center"><label for="scale">Scale</label></div>
                    <div class="h-[14px] flex items-center gap-[4px]">
                        <div class="relative"><select id="scale" class="appearance-none w-[24px] h-[10px] pl-[6px] bg-[#292b2e] rounded-[1px]"><option>D</option></select><svg class="absolute right-[3px] top-[4px] w-[4px] h-[3px] text-[#77797b]"><use href="#i-down"/></svg></div>
                        <div class="relative"><select aria-label="Scale type" class="appearance-none w-[74px] h-[10px] pr-[6px] text-center bg-[#292b2e] rounded-[1px]"><option>Major</option></select><svg class="absolute right-[3px] top-[4px] w-[4px] h-[3px] text-[#77797b]"><use href="#i-down"/></svg></div>
                        <input type="checkbox" aria-label="Snap to scale" class="appearance-none w-[9px] h-[10px] -ml-px bg-[#292b2e] rounded-[1px]">
                    </div>
                    <div class="h-[14px] flex items-center justify-between">
                        <span>Sound Variations</span>
                        <button type="button" aria-label="Edit variations" class="mr-[1px] bg-[#3a3d42] p-px"><svg class="w-[6px] h-[6px]"><use href="#i-wrench"/></svg></button>
                    </div>
                    <p class="h-[14px] mt-[8px] flex items-center">No event selected</p>
                    <div class="h-[14px] flex items-center justify-between"><label for="chordIn">Input Chord</label><input id="chordIn" type="text" class="w-[52px] h-[10px] -mr-[3px] bg-[#393b3f]"></div>
                    <div class="h-[14px] flex items-center justify-between"><label for="chordNow">Current Chord</label><input id="chordNow" type="text" class="w-[52px] h-[10px] -mr-[3px] bg-[#393b3f]"></div>
                </form>

                <svg id="keyboard" class="w-[48px] h-full shrink-0 bg-[#f1f2f4]"></svg>
                <div class="w-[8px] shrink-0 bg-[#141718]"></div>
                <div id="roll" class="relative flex-1 overflow-hidden bg-[#212324]"></div>
                <div class="w-[8px] shrink-0 bg-[#1c1f21] flex flex-col items-center text-[#6f7274]">
                    <svg class="mt-[2px] w-[4px] h-[4px] rotate-180"><use href="#i-down"/></svg>
                    <div class="mt-[96px] w-[2px] h-[84px] bg-[#77797b] rounded"></div>
                </div>
            </div>

            <div class="h-[10px] shrink-0 flex items-center text-[#77797b]">
                <div class="w-[168px] h-full bg-[#323438] shrink-0 flex items-center pl-[121px]"><svg class="w-[7px] h-[7px]"><use href="#i-out"/></svg></div>
                <svg class="ml-[4px] w-[5px] h-[5px]"><use href="#i-back"/></svg>
                <div class="ml-[12px] w-[52px] h-[2px] bg-[#77797b] rounded"></div>
                <svg class="ml-auto w-[5px] h-[5px]"><use href="#i-tri"/></svg>
                <input type="range" aria-label="Editor zoom" value="27" class="appearance-none ml-[7px] w-[46px] h-[6px] bg-transparent [&::-webkit-slider-runnable-track]:h-[2px] [&::-webkit-slider-runnable-track]:bg-[#6a6c6e] [&::-webkit-slider-thumb]:appearance-none [&::-webkit-slider-thumb]:w-[2px] [&::-webkit-slider-thumb]:h-[6px] [&::-webkit-slider-thumb]:-mt-[2px] [&::-webkit-slider-thumb]:bg-[#a4a6a8]">
                <span class="w-[4px] h-[4px] rounded-full bg-[#77797b]"></span>
                <svg class="ml-[6px] mr-[2px] w-[7px] h-[7px]"><use href="#i-corner"/></svg>
            </div>
        </section>

        <!-- Transport -->
        <footer class="mt-[2px] h-[29px] shrink-0 bg-[#202425] flex items-center">
            <div class="ml-[240px] w-[816px] h-[26px] pb-[3px] shrink-0 bg-[#111415] [clip-path:polygon(0_0,816px_0,806px_100%,6px_100%)] flex items-center pl-[7px] text-center text-[#7d8082]">
                <div class="w-[18px]"><svg class="mx-auto w-[14px] h-[8px]" viewBox="0 0 14 8"><circle cx="7" cy="4" r="3" fill="none" stroke="currentColor" stroke-dasharray="1.500 1"/><path d="M0 2l2 2-2 2zM14 2l-2 2 2 2z" fill="currentColor"/></svg><div class="mt-[1px]">MIDI</div></div>
                <div class="w-[44px]"><div class="mx-auto w-[34px] h-[8px] flex flex-col gap-[1px]"><div class="h-[3px] bg-[#2b2f31]"><div class="w-[4px] h-[3px] bg-[#4aa6d8]"></div></div><div class="h-[3px] bg-[#2b2f31]"></div></div><div class="mt-[1px]">Performance</div></div>
                <svg class="w-[23px] h-[14px]" viewBox="0 0 14 14"><circle cx="7" cy="7" r="5.500" fill="none" stroke="#a4a6a8" stroke-width="1.200" stroke-dasharray="1.200 1.680"/></svg>
                <div class="w-[30px] text-[#c6c8ca]"><div class="text-[7px]">48.0 kHz</div><div>24.5 ms</div></div>
                <div class="w-[50px]"><div class="text-[7px] text-[#c6c8ca]">11:10 days</div><div>Record Max</div></div>
                <div class="w-[58px]"><div class="text-[7px] text-[#c6c8ca]">00:00:03.333</div><div class="flex items-center justify-center gap-[3px]">Seconds <svg class="w-[4px] h-[3px]"><use href="#i-down"/></svg></div></div>
                <div class="w-[88px]"><div class="text-[10px] leading-[10px] font-medium text-[#e6e8ea]">00002.01.01.00</div><div class="flex items-center justify-center gap-[3px]">Bars <svg class="w-[4px] h-[3px]"><use href="#i-down"/></svg></div></div>
                <div class="flex items-center text-[#c9cbcd]">
                    <button aria-label="Step back" class="w-[13px] flex justify-center"><svg class="w-[7px] h-[7px]"><use href="#i-back"/></svg></button>
                    <button aria-label="Rewind" class="w-[16px] flex justify-center"><svg class="w-[10px] h-[8px]"><use href="#i-rew"/></svg></button>
                    <button aria-label="Fast forward" class="w-[16px] flex justify-center"><svg class="w-[10px] h-[8px]"><use href="#i-fwd"/></svg></button>
                    <button aria-label="Step forward" class="w-[11px] flex justify-center"><svg class="w-[7px] h-[7px]"><use href="#i-tri"/></svg></button>
                    <button aria-label="Return to zero" class="w-[15px] flex justify-center"><svg class="w-[8px] h-[8px]"><use href="#i-start"/></svg></button>
                    <button aria-label="Stop" class="w-[24px] flex justify-center"><span class="w-[11px] h-[11px] bg-[#31b2dc]"></span></button>
                    <button aria-label="Play" class="w-[18px] flex justify-center"><svg class="w-[12px] h-[12px]"><use href="#i-tri"/></svg></button>
                    <button aria-label="Record" class="w-[18px] flex justify-center"><svg class="w-[13px] h-[13px]"><use href="#i-rec"/></svg></button>
                    <button aria-label="Loop" class="w-[27px] flex justify-center"><svg class="w-[18px] h-[13px]"><use href="#i-loop"/></svg></button>
                </div>
                <div class="w-[16px] text-[#3f708c]"><div>L</div><div>R</div></div>
                <div class="w-[54px] text-[7px] text-[#c6c8ca]"><div>00002.01.01.00</div><div>00004.01.01.00</div></div>
                <div class="w-[32px]"><svg class="mx-auto w-[7px] h-[7px] text-[#a4a6a8]"><use href="#i-power"/></svg><div class="mt-[1px]">Sync</div></div>
                <div class="w-[32px] grid grid-cols-2 gap-y-[2px] justify-items-center text-[#a4a6a8]">
                    <svg class="w-[8px] h-[7px]"><use href="#i-precount"/></svg><svg class="w-[8px] h-[6px]"><use href="#i-preroll"/></svg>
                    <svg class="w-[6px] h-[6px]"><use href="#i-gear"/></svg><svg class="w-[8px] h-[7px]"><use href="#i-punch"/></svg>
                </div>
                <div class="w-[34px]"><div class="flex justify-center gap-[4px] text-[#a4a6a8]"><svg class="w-[6px] h-[7px] text-[#77797b]"><use href="#i-rec"/></svg><svg class="w-[7px] h-[7px]"><use href="#i-wrench"/></svg><svg class="w-[7px] h-[7px]"><use href="#i-metro"/></svg></div><div class="mt-[1px]">Metronome</div></div>
                <div class="w-[30px]"><div class="text-[7px] text-[#c6c8ca]">4 / 4</div><div>Timing</div></div>
                <div class="w-[20px]"><div class="text-[7px] text-[#c6c8ca]">-</div><div>Key</div></div>
                <div class="w-[32px]"><div class="text-[7px] text-[#c6c8ca]">0</div><div>Transpose</div></div>
                <div class="w-[26px]"><div class="text-[7px] text-[#c6c8ca]">72.00</div><div>Tempo</div></div>
                <div class="ml-[7px] w-[49px]">
                    <div class="h-[4px] w-[49px] bg-[#2b2f31]"><div class="h-[4px] w-[37px] bg-[#3c4042]"></div></div>
                    <div class="mt-[5px] flex items-center"><div class="w-[37px] h-[5px] bg-[#2b2f31]"><div class="w-[27px] h-[5px] bg-[#3a7fa3] [background-image:repeating-linear-gradient(90deg,transparent_0_1px,#2d5f7c_1px_2px)]"></div></div><svg class="ml-[4px] w-[9px] h-[6px]" viewBox="0 0 18 12"><rect x="1" y="1" width="16" height="10" rx="5" fill="none" stroke="#6fc3e8" stroke-width="2"/><circle cx="6" cy="6" r="5" fill="#6fc3e8"/></svg></div>
                </div>
            </div>
            <div class="ml-auto flex h-full text-[7px] text-[#d2d4d5]">
                <button class="w-[29px] h-[25px] self-center bg-[#2360cf] text-white">Edit</button>
                <button class="w-[32px]">Mix</button>
                <button class="w-[35px]">Browse</button>
            </div>
        </footer>
    </div>

    <!-- Watermark -->
    <svg class="fixed left-[26px] bottom-[24px] w-[232px] h-[54px] pointer-events-none font-['Roboto',sans-serif] font-bold">
        <g opacity=".6" stroke="#66696c" stroke-width="11" stroke-linejoin="round" fill="#a9abad" paint-order="stroke"><text x="9" y="42" font-size="43">filehorse</text><text x="178" y="42" font-size="22">.com</text></g>
    </svg>

    <script>
        const use = (id, cls) => `<svg class="${cls}"><use href="#${id}"/></svg>`;
        const rect = (x, y, w, h, fill) => `<rect x="${x}" y="${y}" width="${w}" height="${h}" fill="${fill}"/>`;

        // ---- Track list ----
        const tracks = [
            { n: 1, name: 'Drums', color: '#2024e8', vol: 84, icon: 'i-keys', a: 'Addms', b: 'CH 1' },
            { n: 2, name: 'Bass', color: '#2b56e0', vol: 61, icon: 'i-wave', a: 'Input L', b: '' },
            { n: 3, name: '808 Bass', color: '#35a0ee', vol: 45, icon: 'i-keys', a: 'Pigents', b: 'MidIn 1' },
            { n: 4, name: 'Guitar', color: '#3ff0f5', vol: 53, icon: 'i-wave', a: 'Input L', b: '' },
            { n: 5, name: 'Prophet-5 V', color: '#3df2a6', vol: 59, icon: 'i-keys', a: 'Prophet-5 V', b: null },
            { n: 6, name: 'Bells', color: '#3ff0f5', vol: 62, icon: 'i-keys', a: 'Pigts 2', b: 'MidIn 1' },
            { n: 20, name: 'Strings', color: '#651ab3', vol: 58, icon: 'i-keys', a: 'Vieayer', b: 'CH 1', on: true },
        ];

        document.getElementById('tracks').innerHTML = tracks.map(t => {
            const btn = t.on ? 'bg-[#2a2c30]' : 'bg-[#44474b]';
            const io = t.b === '' ? `
                <select aria-label="Input" class="appearance-none w-[30px] h-[10px] pl-[1px]"><option>${t.a}</option></select>
                <span class="w-[16px] text-[5px] text-[#6f7274]">Mono</span>
                ${use('i-ring', 'w-[6px] h-[6px] ml-[5px]')}${use('i-down', 'w-[4px] h-[3px] ml-[6px] text-[#85888a]')}`
                : `${use('i-keys', 'w-[6px] h-[4px] ml-[1px] mr-[3px]')}
                <select aria-label="Instrument" class="appearance-none ${t.b ? 'w-[23px]' : 'w-[52px]'} h-[10px]"><option>${t.a}</option></select>
                ${use('i-down', 'w-[4px] h-[3px] text-[#85888a]')}
                ${t.b ? `<select aria-label="Channel" class="appearance-none w-[21px] ml-[5px] h-[10px]"><option>${t.b}</option></select>${use('i-down', 'w-[4px] h-[3px] text-[#85888a]')}` : ''}`;
            return `
            <div class="h-[39px] w-[132px] flex border-b border-[#15171a] ${t.on ? 'bg-[#505359] text-[#e2e4e6]' : 'bg-[#35383c]'}">
                <div class="w-[5px] flex flex-col justify-end mr-[1px]" style="background:${t.color}"><span class="h-[7px] bg-black/35"></span></div>
                <div class="w-[14px] pt-[4px] text-center font-semibold ${t.on ? '' : 'text-[#94979a]'}">${t.n}</div>
                <div class="flex-1 pt-[3px]">
                    <div class="flex h-[10px] pr-[4px] items-center">
                        <div class="flex gap-px h-full text-[8px]">
                            <button class="w-[12px] ${btn}">M</button>
                            <button class="w-[12px] ${btn}">S</button>
                            <button aria-label="Record" class="w-[12px] flex items-center justify-center ${t.on ? 'bg-[#e0524f] text-white' : btn}">${use('i-rec', 'w-[6px] h-[6px]')}</button>
                            <button aria-label="Monitor" class="w-[12px] flex items-center justify-center ${t.on ? 'bg-[#6dbbd6] text-white' : btn}">${use('i-halfmoon', 'w-[7px] h-[7px]')}</button>
                        </div>
                        <span class="ml-[3px] whitespace-nowrap font-['Liberation_Sans',sans-serif] text-[7px] ${t.on ? '' : 'text-[#9fa2a5]'}">${t.name}</span>
                        ${use(t.icon, 'ml-auto w-[10px] h-[7px] shrink-0 text-[#c9cbcd]')}
                    </div>
                    <input type="range" aria-label="${t.name} volume" value="${t.vol}" class="appearance-none block mt-[4px] w-[70px] h-[3px] [&::-webkit-slider-thumb]:appearance-none [&::-webkit-slider-thumb]:w-0" style="background:linear-gradient(90deg,${t.on ? '#c9cbcd' : '#8f9193'} ${t.vol}%,#15171a ${t.vol}%)">
                    <div class="mt-[2px] w-[70px] h-[10px] flex items-center bg-[#2a2c2f]">${io}</div>
                </div>
            </div>`;
        }).join('');

        // ---- Arrangement timeline ----
        const BAR = 58.2;
        const px = bar => Math.round((bar - 1) * BAR);

        let ticks = '', labels = '', grid = '';
        for (let b = 1; b < 60; b++) {
            ticks += rect(px(b), 7, 1, 6, '#a0a2a4');
            if (b <= 22) labels += `<span class="absolute top-0 text-[7px] leading-[7px] font-medium" style="left:${px(b)}px">${b}</span>`;
            grid += rect(px(b), 0, 1, '100%', '#3a3d40');
            for (let s = 1; s < 8; s++) {
                ticks += rect(px(b + s / 8), 11, 1, s % 2 ? 1 : 2, '#85888a');
                if (s % 2 === 0) grid += rect(px(b + s / 8), 0, 1, '100%', '#303335');
            }
        }
        document.getElementById('ruler').innerHTML = `
            <div class="absolute left-[58px] w-[117px] -top-[3px] bottom-0 bg-[#3c404c] border-t-[3px] border-[#707378]"></div>
            <svg class="absolute w-full h-full">${ticks}<path d="M169 0h6v5z" fill="#85888a"/></svg>${labels}`;
        document.getElementById('markers').innerHTML += `<svg class="absolute inset-0 w-full h-full">${grid}</svg>`;

        // Clip contents, one bar or one phrase at a time
        const art = {
            drums(w) {
                let s = '';
                for (let x = 0; x < w; x += 4) s += rect(x, 9, 2, 1, '#dfe2ff');
                for (let x = 0; x < w; x += BAR) {
                    for (const [a, b] of [[14, 20], [43, 17]]) s += rect(x + a, 18, b, 1, '#cdd2ff');
                    for (const [a, b] of [[0, 3], [7, 8], [36, 2], [40, 4]]) s += rect(x + a, 27, b, 1, '#cdd2ff');
                }
                return s;
            },
            bass(w, off) {
                let s = '';
                for (let x = off; x < w; x += BAR * 2) {
                    s += `<path transform="translate(${x} 18)" fill="#132a78" d="M0-4l4-2 2 3 2-3 3 1 3 3v4l-3 3-3 1-2-3-2 3-4-2zM43-3l2 2 2-2 2 2 2-3 2 2 2-3 4 0 4-1 1 2 3-3 4 4v6l-4 4-3-3-1 2-8 0-2-3-2 2-2-3-2 2-2-2-2 2zM83-6l8 2 13 2 5 1v4l-5 1-13 1-8 1zM116-4l4-1 2 2 3-3 5 4v4l-5 4-3-3-2 2-4-1z"/>`;
                }
                return s;
            },
            sub(w) {
                return [[0, 9, 3], [7, 9, 7], [58, 19, 3], [65, 19, 7], [84, 26, 25], [117, 9, 2], [123, 9, 8], [174, 19, 3], [181, 19, 7], [200, 14, 18]]
                    .map(([x, y, l]) => rect(x, y, l, 1, '#cfe8f8')).join('');
            },
            guitar(w, off) {
                let s = rect(0, 18, w, 1, '#23888b');
                for (let x = off; x < w; x += BAR * 2) {
                    for (const [a, h] of [[1, 2], [7, 1], [14, 2], [21, 3], [26, 2], [36, 4], [43, 3], [50, 3], [57, 5], [65, 5], [71, 4], [76, 3], [81, 4], [86, 2]])
                        s += `<path d="M${x + a} ${18 - h}v${h * 2 + 1}l${h > 3 ? 5 : 3}-${h}v-1z" fill="#14595e"/>`;
                    s += rect(x + 57, 17, 35, 3, '#1a6b70');
                }
                return s;
            },
            prophet(w) {
                let s = rect(36, 15, 1, 18, '#136c4c') + rect(226, 12, 1, 20, '#136c4c') + rect(0, 34, w, 1, '#178a60');
                for (let i = 0, x = 7; x < w; x += 15, i++) {
                    s += rect(x, [13, 13, 16, 12, 12, 11, 17, 17][i % 8], 1, 1, '#b8f5da') + rect(x, 27, 1, 1, '#b8f5da');
                }
                return s;
            },
            bells(w) {
                let s = '';
                for (let x = 0; x < w; x += 65.4) for (const a of [0, 11, 22, 44, 55]) s += rect(x + a, 11 + a % 2, 3, 2, '#0d5f68');
                for (let x = 0; x < w - 20; x += BAR) s += rect(x, 24, 3, 2, '#0d5f68') + rect(x + 22, 24, 6, 2, '#0d5f68') + rect(x + 30, 21, 13, 2, '#0d5f68') + rect(x + 44, 20, 6, 2, '#0d5f68');
                return s;
            },
            strings() {
                let s = '<path d="M0 15h48V5h16v8h28v3h10v-6M98 8v8M108 8v8M0 15l8-3h42" fill="none" stroke="#a17fcb"/>';
                for (const [x, y] of [[6, 18], [21, 18], [36, 18], [51, 18], [66, 18], [80, 18], [95, 18], [110, 18], [6, 13], [21, 13], [44, 21], [44, 26], [66, 26], [95, 26], [102, 28], [110, 26]]) s += rect(x, y, 3, 1, '#7a58a4');
                return s + rect(6, 30, 1, 5, '#8a68b4') + rect(114, 28, 2, 8, '#8a68b4');
            },
            click(w) {
                return [14, 28, 42].map(x => rect(x, 9, 1, 1, '#77749a')).join('') + '<path d="M2 32h1l2-2v6l-2-2H2z" fill="#fff"/>';
            },
        };

        // [lane, start x, end x, label, colour, art, offset of the phrase inside the clip]
        const clips = [[0, 0, 58, 'Click', '#33314f', 'click', 0]];
        for (let b = 2; b < 22; b += 4) {
            clips.push([0, px(b), px(b + 4), 'Drums', '#1a1ea6', 'drums', 0]);
            clips.push([3, b === 2 ? 43 : px(b), px(b + 4), 'Guitar', '#29999d', 'guitar', b === 2 ? 15 : 0]);
            clips.push([4, px(b), px(b + 4), 'Prophet-5 V', '#1fa173', 'prophet', 0]);
        }
        clips.push([1, 54, px(6), 'Bass', '#2140aa', 'bass', 4], [1, px(6), px(10), 'Bass', '#2140aa', 'bass', 0]);
        clips.push([2, px(2), px(6), '808 Bass', '#1f70a5', 'sub', 0], [2, px(18), px(22), '808 Bass V2', '#1f70a5', 'sub', 0]);
        clips.push([5, px(2), px(22), 'Bells', '#27979f', 'bells', 0]);
        clips.push([6, px(2), 178, 'Strings', '#b08bda', 'strings', 0]);

        let rows = '';
        for (let i = 0; i < 7; i++) rows += `<div class="h-[39px] border-b border-[#1a1c1e] ${i === 6 ? 'bg-[#303235]' : ''}"></div>`;
        document.getElementById('lanes').innerHTML = rows +
            `<svg class="absolute inset-0 w-full h-full opacity-70">${grid}</svg>` +
            clips.map(([lane, x0, x1, name, color, kind, off]) => `
                <div class="absolute h-[38px] overflow-hidden rounded-[2px] border ${kind === 'strings' ? 'border-white' : 'border-black/25'}" style="left:${x0}px;top:${lane * 39 + 1}px;width:${x1 - x0}px;background:${color}">
                    <svg class="absolute -left-px -top-px w-full h-full">${art[kind](x1 - x0, off)}</svg>
                    <span class="absolute left-[1px] top-0 leading-[8px] font-semibold ${kind === 'click' ? 'text-[#8d8ba0]' : 'text-white'}">${name}</span>
                </div>`).join('') +
            `<svg class="absolute inset-0 w-full h-full opacity-10 pointer-events-none">${grid}</svg>`;

        // ---- Note editor ----
        const EBAR = 156.2, ROW = 8.125;
        const ex = beat => Math.round((beat - 8) * EBAR / 4);
        const rowTop = pitch => 118.6 - (pitch - 59) * ROW;   // pitch 60 is C4

        let eticks = '', elabels = '', egrid = '';
        for (let q = 32; q < 240; q++) {
            const x = ex(q / 4), bar = q % 16 === 0, beat = q % 4 === 0;
            eticks += rect(x, bar ? 8 : beat ? 11 : 12, 1, bar ? 6 : beat ? 3 : 2, '#85888a');
            egrid += rect(x, 0, 1, '100%', bar ? '#45484b' : beat ? '#303335' : '#272a2c');
            if (beat && x < 1190) {
                const n = Math.floor(q / 16), k = q / 4 % 4;
                elabels += `<span class="absolute top-0 ${k ? 'text-[6px] leading-[8px]' : 'text-[7px] leading-[8px] font-medium'}" style="left:${x + (k ? 1 : 0)}px">${k ? n + '.' + (k + 1) : n}</span>`;
            }
        }
        document.getElementById('editorRuler').innerHTML = `
            <div class="absolute left-0 w-[312px] -top-[3px] bottom-0 bg-[#3c404c] border-t-[3px] border-[#707378]"></div>
            <svg class="absolute w-full h-full">${eticks}<path d="M306 0h6v5z" fill="#85888a"/></svg>${elabels}`;

        const black = [1, 3, 6, 8, 10];
        let keys = '<defs><linearGradient id="kg"><stop stop-color="#8f9193"/><stop offset=".3" stop-color="#f1f2f4"/></linearGradient></defs><rect width="48" height="100%" fill="url(#kg)"/>';
        let bands = '', blacks = '';
        for (let p = 73; p > 35; p--) {
            const y = rowTop(p), k = p % 12;
            if (black.includes(k)) {
                blacks += rect(0, y, 31, 9, '#0c0d0f') + rect(1, y + 2, 26, 5, '#2b2e31');
                bands += rect(0, y, 322, ROW, '#232527');
                keys += rect(0, Math.round(y + 4), 48, 1, '#b4b6b8');
            } else {
                bands += rect(0, y, 322, ROW, '#2a2c2f');
                if (k === 0 || k === 5) keys += rect(0, Math.round(y + ROW), 48, 1, '#a4a6a8');
                if (k === 0 && y < 290) {
                    blacks += `<text x="38" y="${y + 3}" font-size="6" font-weight="600" fill="#222">C ${p / 12 - 1}</text>`;
                    bands += rect(0, Math.round(y + ROW), 322, 1, '#36393c');
                }
            }
        }
        document.getElementById('keyboard').innerHTML = keys + blacks;

        // [pitch, beat positions, colour]
        const notes = [
            [64, [13.5], '#2e7d27'],
            [62, [8.5, 9.5, 10.5, 11.5], '#a8952f'],
            [61, [11], '#8f5f63'],
            [59, [8.5, 9.5, 10.5, 11.5, 12.5, 13.5, 14.5, 15.5], '#a1789f'],
            [57, [11, 15], '#7c1f4c'],
            [55, [12.5, 14.5, 15.5], '#246e9e'],
            [54, [15], '#a06a6a'],
        ];
        document.getElementById('roll').innerHTML = `
            <svg class="absolute inset-0 w-full h-full">${rect(0, 0, 322, '100%', '#2a2c2f')}${bands}<g opacity=".55">${egrid}</g>${rect(321, 0, 1, '100%', '#0e1011')}${rect(0, 0, 1, '100%', '#a4a6a8')}</svg>` +
            notes.map(([p, beats, color]) => beats.map(b => `
                <div class="absolute w-[10px] h-[9px] border ${p === 57 ? 'border-[#7c1f4c]' : 'border-white/35'} flex justify-end" style="left:${ex(b)}px;top:${Math.round(rowTop(p))}px;background:${color}"><span class="w-[3px] ${p === 57 ? 'bg-black/15' : 'bg-black/45'}"></span></div>`).join('')).join('');
    </script>
</body>
</html>
